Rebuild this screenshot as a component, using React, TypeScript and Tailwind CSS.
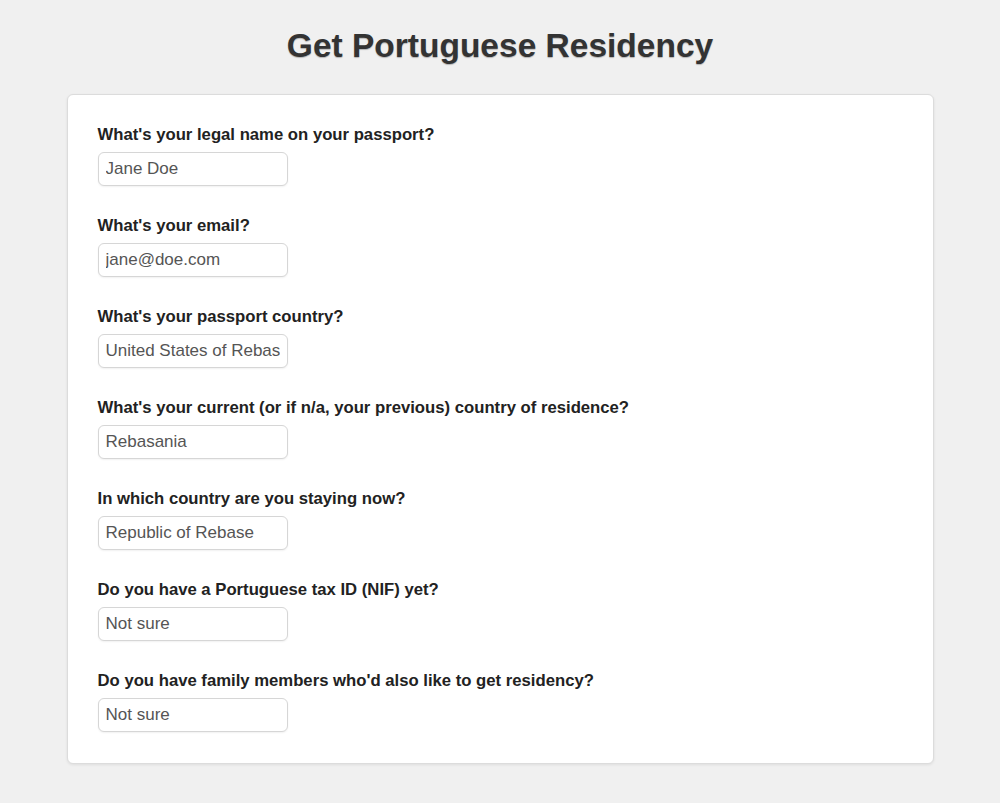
import React from "react";

const fields: { label: string; value: string }[] = [
  { label: "What's your legal name on your passport?", value: "Jane Doe" },
  { label: "What's your email?", value: "jane@doe.com" },
  { label: "What's your passport country?", value: "United States of Rebasea" },
  { label: "What's your current (or if n/a, your previous) country of residence?", value: "Rebasania" },
  { label: "In which country are you staying now?", value: "Republic of Rebase" },
  { label: "Do you have a Portuguese tax ID (NIF) yet?", value: "Not sure" },
  { label: "Do you have family members who'd also like to get residency?", value: "Not sure" },
];

export default function App() {
  return (
    <div
      className="min-h-[803px] bg-[#f0f0f0] pt-[25px] pb-[38px]"
      style={{ fontFamily: '"Liberation Sans", Arial, sans-serif' }}
    >
      <h1 className="text-center text-[33.5px] leading-[42px] font-bold text-[#333] [text-shadow:0_1px_1px_rgba(0,0,0,0.25)]">
        Get Portuguese Residency
      </h1>
      <div className="mx-auto mt-[27px] w-[867px] rounded-[6px] border border-[#dcdcdc] bg-white px-[30px] pt-[30px] pb-[31px] shadow-[0_1px_3px_rgba(0,0,0,0.08)]">
        <div className="flex flex-col gap-[30px]">
          {fields.map((f) => (
            <div key={f.label} className="flex flex-col">
              <label className="text-[16.7px] leading-[20px] font-bold text-[#222]">{f.label}</label>
              <input
                readOnly
                value={f.value}
                className="mt-[7px] h-[34px] w-[190px] rounded-[6px] border border-[#d6d6d6] bg-white px-[7px] text-[17px] text-[#555] outline-none shadow-[0_1px_2px_rgba(0,0,0,0.06)]"
                style={{ fontFamily: '"Liberation Sans", Arial, sans-serif' }}
              />
            </div>
          ))}
        </div>
      </div>
    </div>
  );
}
